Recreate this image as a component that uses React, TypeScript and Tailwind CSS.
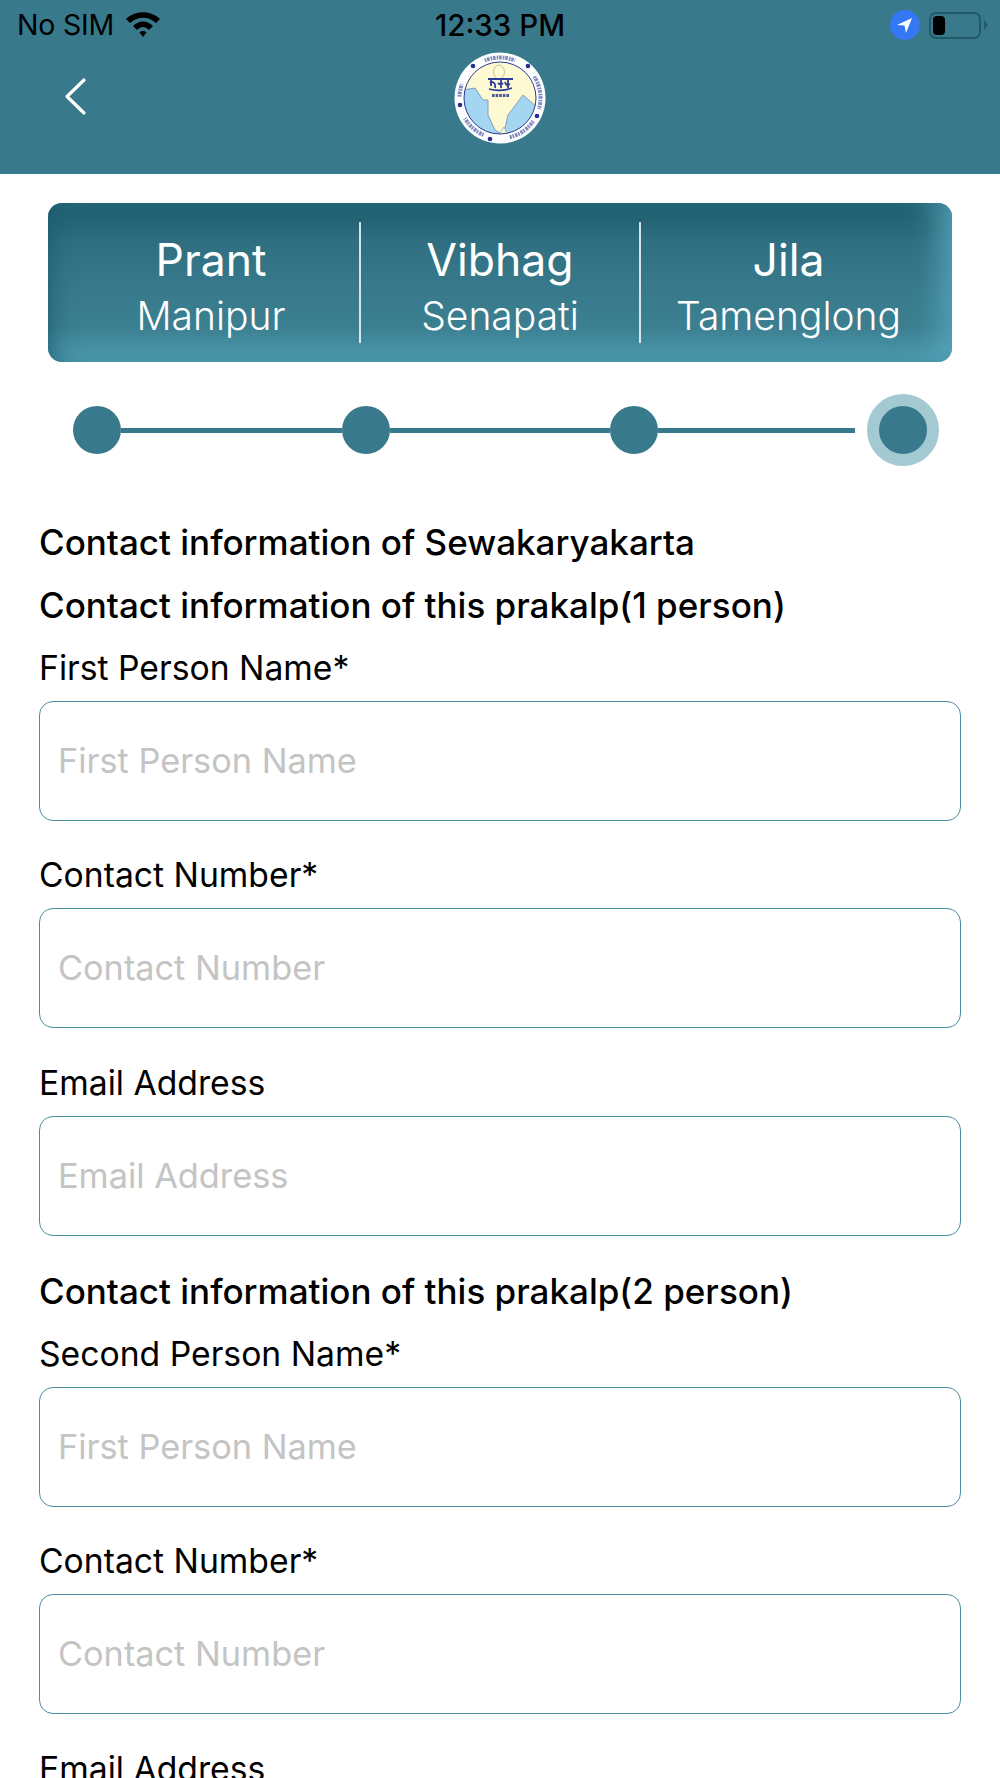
const levels = [
  { title: "Prant", value: "Manipur" },
  { title: "Vibhag", value: "Senapati" },
  { title: "Jila", value: "Tamenglong" },
]

const ringDots = [
  [6, 53],
  [19, 14],
  [74, 14],
  [83, 64],
  [36, 87],
]

// lettering round the logo ring, angles in degrees
const ringArcs = [
  [-112, -68],
  [-32, 16],
  [35, 76],
  [114, 150],
  [-178, -160],
]

function arcPath(from: number, to: number) {
  const r = 40.5
  const x0 = 46 + r * Math.cos((from * Math.PI) / 180)
  const y0 = 46 + r * Math.sin((from * Math.PI) / 180)
  const x1 = 46 + r * Math.cos((to * Math.PI) / 180)
  const y1 = 46 + r * Math.sin((to * Math.PI) / 180)
  return `M${x0} ${y0} A${r} ${r} 0 0 1 ${x1} ${y1}`
}

function Logo() {
  return (
    <svg className="blur-[0.4px]" width="92" height="92" viewBox="0 0 92 92">
      <defs>
        <clipPath id="inner">
          <circle cx="46" cy="46" r="36" />
        </clipPath>
      </defs>
      <circle cx="46" cy="46" r="45.5" fill="#ffffff" />
      <circle cx="46" cy="46" r="36" fill="#fdf9d2" />
      <g clipPath="url(#inner)">
        <path
          d="M9 38 L21 36 L29 48 L34 48 L34 63 L41 78 L46 81 L51 76 L54 63 L69 43 L84 56 L84 90 L8 90 Z"
          fill="#a4d6f2"
          stroke="#6f8cc0"
          strokeWidth="0.8"
        />
        <path d="M46 81 L50 75 L54 84 L42 84 Z" fill="#fdf9d2" stroke="#6f8cc0" strokeWidth="0.6" />
      </g>
      <circle cx="46" cy="46" r="36" fill="none" stroke="#2c3a94" strokeWidth="1" />
      {ringArcs.map(([from, to]) => (
        <path key={from} d={arcPath(from, to)} fill="none" stroke="#5560ac" strokeWidth="4" strokeDasharray="1.6 0.8 2.6 1.1" opacity="0.75" />
      ))}
      {ringDots.map(([cx, cy]) => (
        <circle key={cx} cx={cx} cy={cy} r="2.3" fill="#23308f" />
      ))}
      {/* emblem */}
      <ellipse cx="45" cy="20" rx="5.5" ry="7" fill="none" stroke="#c6c59a" strokeWidth="1" />
      <path d="M34 27 H59" fill="none" stroke="#2a3a9c" strokeWidth="2" />
      <path
        d="M37 27 V34 M36 31 C39 29 42 31 41 36 M47 27 V36 M44 31 C46 33 47 33 49 31 M54 27 V36 M51 30 C52 34 54 33 56 32 M35 37 C42 39 50 39 58 36"
        fill="none"
        stroke="#2a3a9c"
        strokeWidth="1.8"
      />
      <path d="M38 43.5 H56" stroke="#2a3a9c" strokeWidth="3" strokeDasharray="2.6 1" opacity="0.85" />
    </svg>
  )
}

function StatusBar() {
  return (
    <div className="h-[50px] flex items-center justify-between relative text-[28.5px] text-black font-['Inter',sans-serif]">
      <div className="flex items-center pl-[17px]">
        <span className="tracking-[-0.2px]">No SIM</span>
        <svg className="ml-[10px] -mt-[3px]" width="38" height="28" viewBox="0 0 38 28">
          <path d="M2 9 C11 0 27 0 36 9 L32 13 C24 6 14 6 6 13 Z" fill="#000000" />
          <path d="M9 16 C15 10 23 10 29 16 L25 20 C21 16 17 16 13 20 Z" fill="#000000" />
          <path d="M15.5 22.5 C17.5 20.5 20.5 20.5 22.5 22.5 L19 27 Z" fill="#000000" />
        </svg>
      </div>
      <span className="absolute left-[435px] font-medium text-[29.5px]">12:33 PM</span>
      <div className="flex items-center pr-[12px]">
        <div className="w-[30px] h-[30px] rounded-full bg-[#3478f6] flex items-center justify-center">
          <svg width="18" height="18" viewBox="0 0 18 18">
            <path d="M16 2 L1 9 L8.5 9.5 L10 17 Z" fill="#ffffff" />
          </svg>
        </div>
        <div className="ml-[9px] w-[52px] h-[27px] rounded-[7px] border-2 border-[#235a6a] p-[2px]">
          <div className="w-[12px] h-full rounded-[4px] bg-black" />
        </div>
        <div className="ml-[3px] w-0 h-0 border-y-[5px] border-y-transparent border-l-[4px] border-l-[#235a6a]" />
      </div>
    </div>
  )
}

function Stepper() {
  return (
    <div className="mt-[32px] h-[72px] pl-[73px] flex items-center">
      <div className="w-[48px] h-[48px] rounded-full bg-[#387a8c]" />
      <div className="w-[221px] h-[5px] bg-[#387a8c]" />
      <div className="w-[48px] h-[48px] rounded-full bg-[#387a8c]" />
      <div className="w-[220px] h-[5px] bg-[#387a8c]" />
      <div className="w-[48px] h-[48px] rounded-full bg-[#387a8c]" />
      <div className="w-[197px] h-[5px] bg-[#387a8c]" />
      <div className="ml-[12px] w-[72px] h-[72px] rounded-full border-[12px] border-[#a3c9d2] bg-[#387a8c]" />
    </div>
  )
}

function Field({ label, placeholder, className }: { label: string; placeholder: string; className: string }) {
  return (
    <div className={className}>
      <div className="h-[40px] flex items-center text-[33.7px] text-black">{label}</div>
      <input
        placeholder={placeholder}
        className="mt-[13px] block w-full h-[120px] rounded-[14px] border-[1.5px] border-[#4a8fa3] px-[18px] pb-[2px] text-[34.3px] bg-white outline-none placeholder:text-[#c4c4c4]"
      />
    </div>
  )
}

export default function App() {
  return (
    <div className="w-[1000px] h-[1778px] overflow-hidden bg-white font-['Inter',sans-serif]">
      <header className="h-[174px] bg-[#387a8c]">
        <StatusBar />
        <div className="relative h-[96px] flex items-center justify-center">
          <svg className="absolute left-[62px] top-[26px]" width="26" height="40" viewBox="0 0 26 40">
            <path d="M22 4 L5 20.5 L22 37" fill="none" stroke="#ffffff" strokeWidth="3.2" strokeLinecap="round" strokeLinejoin="round" />
          </svg>
          <Logo />
        </div>
      </header>

      <div className="mt-[29px] mx-[48px] h-[159px] rounded-[14px] bg-[linear-gradient(180deg,#1e5c6d_0%,#2f6f81_25%,#387a8c_55%,#3b7f91_78%,#4f9bb0_100%)] shadow-[inset_14px_0_26px_-14px_#1a5a6c,inset_-26px_0_32px_-16px_#57a5ba] px-[15px] py-[19px] grid grid-cols-[296px_280px_297px] text-white">
        {levels.map((level, i) => (
          <div key={level.title} className={`h-[121px] pt-[10px] flex flex-col items-center justify-center ${i > 0 ? "border-l-2 border-white/80" : ""}`}>
            <div className="text-[44.5px] leading-[56px]">{level.title}</div>
            <div className="text-[39px] leading-[56px] font-light">{level.value}</div>
          </div>
        ))}
      </div>

      <Stepper />

      <main className="px-[39px] pt-[56px]">
        <h2 className="h-[40px] flex items-center text-[35px] font-medium text-black">Contact information of Sewakaryakarta</h2>
        <h2 className="mt-[23px] h-[40px] flex items-center text-[35px] font-medium text-black">Contact information of this prakalp(1 person)</h2>
        <Field className="mt-[23px]" label="First Person Name*" placeholder="First Person Name" />
        <Field className="mt-[34px]" label="Contact Number*" placeholder="Contact Number" />
        <Field className="mt-[35px]" label="Email Address" placeholder="Email Address" />
        <h2 className="mt-[35px] h-[40px] flex items-center text-[35px] font-medium text-black">Contact information of this prakalp(2 person)</h2>
        <Field className="mt-[23px]" label="Second Person Name*" placeholder="First Person Name" />
        <Field className="mt-[34px]" label="Contact Number*" placeholder="Contact Number" />
        <Field className="mt-[35px]" label="Email Address" placeholder="Email Address" />
      </main>
    </div>
  )
}
